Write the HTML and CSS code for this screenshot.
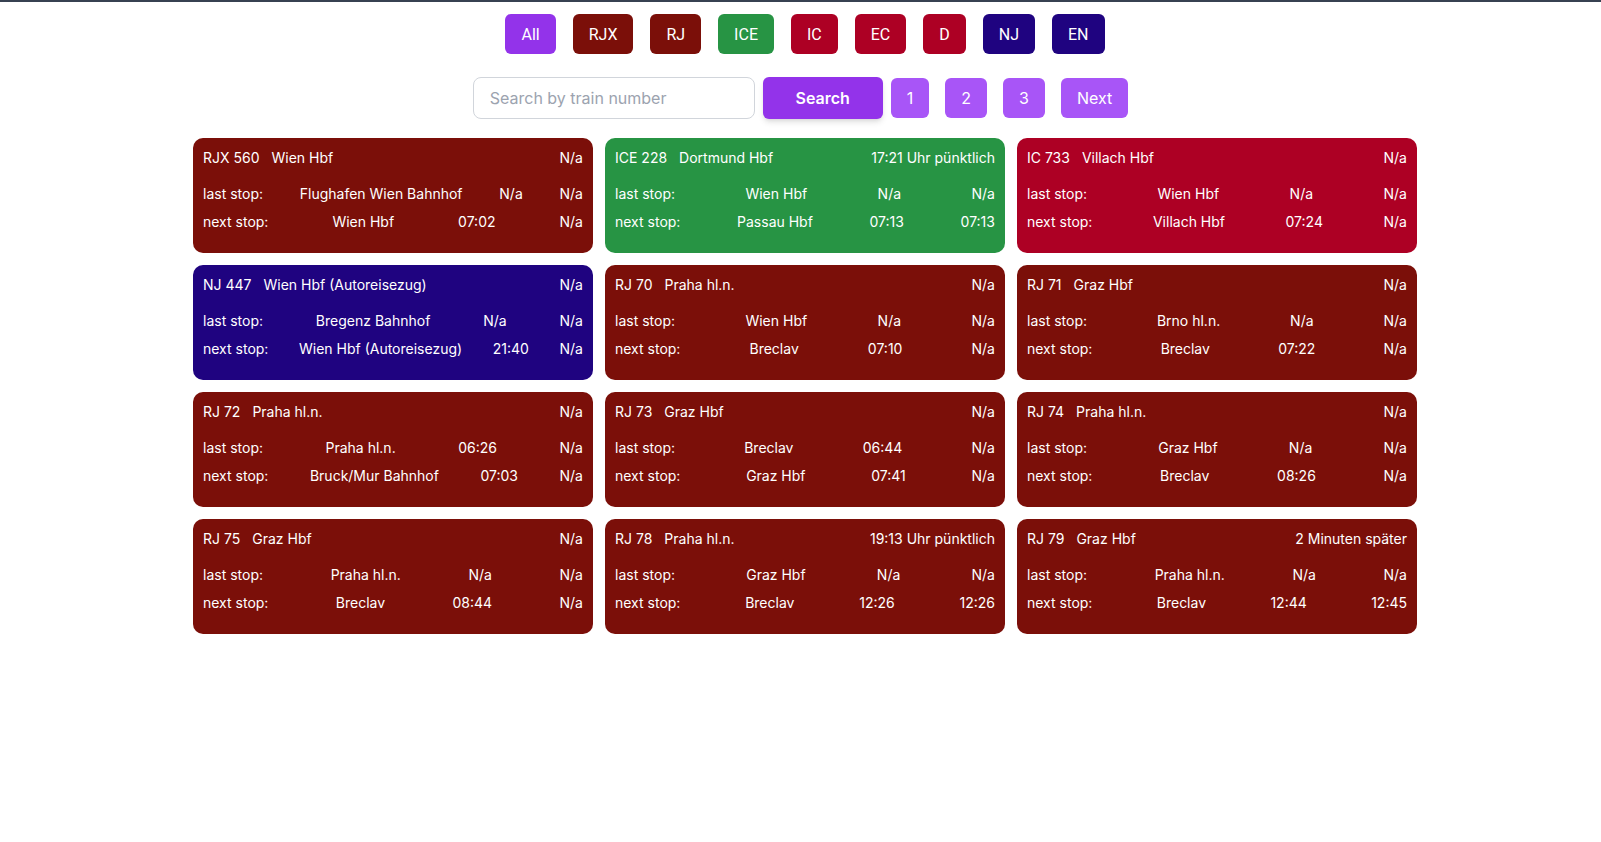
FILE: index.html
```html
<!DOCTYPE html>
<html lang="en">
<head>
<meta charset="utf-8">
<title>Trains</title>
<link rel="stylesheet" href="styles.css">
</head>
<body>
<div class="page">
  <nav class="filters">
    <button class="fbtn all">All</button>
    <button class="fbtn red">RJX</button>
    <button class="fbtn red">RJ</button>
    <button class="fbtn green">ICE</button>
    <button class="fbtn crimson">IC</button>
    <button class="fbtn crimson">EC</button>
    <button class="fbtn crimson">D</button>
    <button class="fbtn navy">NJ</button>
    <button class="fbtn navy">EN</button>
  </nav>

  <div class="searchbar">
    <input class="search-input" type="text" placeholder="Search by train number">
    <button class="search-btn">Search</button>
    <div class="pager">
      <button class="pbtn">1</button>
      <button class="pbtn">2</button>
      <button class="pbtn">3</button>
      <button class="pbtn">Next</button>
    </div>
  </div>

  <div class="grid">
    <div class="card red">
      <div class="head"><div class="title"><span>RJX 560</span><span>Wien Hbf</span></div><span>N/a</span></div>
      <div class="row"><span>last stop:</span><span>Flughafen Wien Bahnhof</span><span>N/a</span><span>N/a</span></div>
      <div class="row"><span>next stop:</span><span>Wien Hbf</span><span>07:02</span><span>N/a</span></div>
    </div>
    <div class="card green">
      <div class="head"><div class="title"><span>ICE 228</span><span>Dortmund Hbf</span></div><span>17:21 Uhr pünktlich</span></div>
      <div class="row"><span>last stop:</span><span>Wien Hbf</span><span>N/a</span><span>N/a</span></div>
      <div class="row"><span>next stop:</span><span>Passau Hbf</span><span>07:13</span><span>07:13</span></div>
    </div>
    <div class="card crimson">
      <div class="head"><div class="title"><span>IC 733</span><span>Villach Hbf</span></div><span>N/a</span></div>
      <div class="row"><span>last stop:</span><span>Wien Hbf</span><span>N/a</span><span>N/a</span></div>
      <div class="row"><span>next stop:</span><span>Villach Hbf</span><span>07:24</span><span>N/a</span></div>
    </div>

    <div class="card navy">
      <div class="head"><div class="title"><span>NJ 447</span><span>Wien Hbf (Autoreisezug)</span></div><span>N/a</span></div>
      <div class="row"><span>last stop:</span><span>Bregenz Bahnhof</span><span>N/a</span><span>N/a</span></div>
      <div class="row"><span>next stop:</span><span>Wien Hbf (Autoreisezug)</span><span>21:40</span><span>N/a</span></div>
    </div>
    <div class="card red">
      <div class="head"><div class="title"><span>RJ 70</span><span>Praha hl.n.</span></div><span>N/a</span></div>
      <div class="row"><span>last stop:</span><span>Wien Hbf</span><span>N/a</span><span>N/a</span></div>
      <div class="row"><span>next stop:</span><span>Breclav</span><span>07:10</span><span>N/a</span></div>
    </div>
    <div class="card red">
      <div class="head"><div class="title"><span>RJ 71</span><span>Graz Hbf</span></div><span>N/a</span></div>
      <div class="row"><span>last stop:</span><span>Brno hl.n.</span><span>N/a</span><span>N/a</span></div>
      <div class="row"><span>next stop:</span><span>Breclav</span><span>07:22</span><span>N/a</span></div>
    </div>

    <div class="card red">
      <div class="head"><div class="title"><span>RJ 72</span><span>Praha hl.n.</span></div><span>N/a</span></div>
      <div class="row"><span>last stop:</span><span>Praha hl.n.</span><span>06:26</span><span>N/a</span></div>
      <div class="row"><span>next stop:</span><span>Bruck/Mur Bahnhof</span><span>07:03</span><span>N/a</span></div>
    </div>
    <div class="card red">
      <div class="head"><div class="title"><span>RJ 73</span><span>Graz Hbf</span></div><span>N/a</span></div>
      <div class="row"><span>last stop:</span><span>Breclav</span><span>06:44</span><span>N/a</span></div>
      <div class="row"><span>next stop:</span><span>Graz Hbf</span><span>07:41</span><span>N/a</span></div>
    </div>
    <div class="card red">
      <div class="head"><div class="title"><span>RJ 74</span><span>Praha hl.n.</span></div><span>N/a</span></div>
      <div class="row"><span>last stop:</span><span>Graz Hbf</span><span>N/a</span><span>N/a</span></div>
      <div class="row"><span>next stop:</span><span>Breclav</span><span>08:26</span><span>N/a</span></div>
    </div>

    <div class="card red">
      <div class="head"><div class="title"><span>RJ 75</span><span>Graz Hbf</span></div><span>N/a</span></div>
      <div class="row"><span>last stop:</span><span>Praha hl.n.</span><span>N/a</span><span>N/a</span></div>
      <div class="row"><span>next stop:</span><span>Breclav</span><span>08:44</span><span>N/a</span></div>
    </div>
    <div class="card red">
      <div class="head"><div class="title"><span>RJ 78</span><span>Praha hl.n.</span></div><span>19:13 Uhr pünktlich</span></div>
      <div class="row"><span>last stop:</span><span>Graz Hbf</span><span>N/a</span><span>N/a</span></div>
      <div class="row"><span>next stop:</span><span>Breclav</span><span>12:26</span><span>12:26</span></div>
    </div>
    <div class="card red">
      <div class="head"><div class="title"><span>RJ 79</span><span>Graz Hbf</span></div><span>2 Minuten später</span></div>
      <div class="row"><span>last stop:</span><span>Praha hl.n.</span><span>N/a</span><span>N/a</span></div>
      <div class="row"><span>next stop:</span><span>Breclav</span><span>12:44</span><span>12:45</span></div>
    </div>
  </div>
</div>
</body>
</html>
```
FILE: styles.css
```css
* { box-sizing: border-box; }

html, body {
  margin: 0;
  padding: 0;
  background: #ffffff;
}

body {
  border-top: 2px solid #374151;
  font-family: Inter, "Noto Sans", sans-serif;
  color: #111827;
}

.page {
  padding-top: 12px;
}

.filters {
  display: flex;
  justify-content: center;
  gap: 17px;
  padding-left: 9px;
}

.fbtn {
  height: 40px;
  padding: 0 16px;
  border: none;
  border-radius: 6px;
  color: #ffffff;
  font-family: Roboto, "Liberation Sans", sans-serif;
  font-size: 16px;
  cursor: pointer;
}

.all { background: #9333ea; }
.red { background: #7b0f09; }
.green { background: #279444; }
.crimson { background: #ad0024; }
.navy { background: #1f0380; }

.searchbar {
  display: flex;
  justify-content: center;
  align-items: center;
  gap: 8px;
  margin-top: 23px;
}

.search-input {
  width: 282px;
  height: 42px;
  padding: 0 16px;
  border: 1px solid #d1d5db;
  border-radius: 8px;
  font-family: Inter, "Noto Sans", sans-serif;
  font-size: 16px;
  color: #111827;
  outline: none;
}

.search-input::placeholder {
  color: #9ca3af;
}

.search-btn {
  width: 120px;
  height: 42px;
  border: none;
  border-radius: 6px;
  background: #9333ea;
  color: #ffffff;
  font-family: Inter, "Noto Sans", sans-serif;
  font-size: 16px;
  font-weight: 600;
  box-shadow: 0 4px 6px -1px rgba(0,0,0,0.12), 0 2px 4px -2px rgba(0,0,0,0.1);
}

.pager {
  display: flex;
  gap: 16px;
}

.pbtn {
  height: 40px;
  padding: 0 16px;
  border: none;
  border-radius: 6px;
  background: #a855f7;
  color: #ffffff;
  font-family: Inter, "Noto Sans", sans-serif;
  font-size: 16px;
}

.grid {
  display: grid;
  grid-template-columns: repeat(3, 400px);
  justify-content: center;
  gap: 12px;
  margin-top: 19px;
  padding-left: 9px;
}

.card {
  height: 115px;
  padding: 10px 10px 0;
  border-radius: 10px;
  color: #ffffff;
  font-size: 14px;
  line-height: 20px;
}

.head {
  display: flex;
  justify-content: space-between;
  margin-bottom: 12px;
}

.title {
  display: flex;
  gap: 12px;
}

.row {
  display: flex;
  justify-content: space-between;
  padding: 4px 0;
}
```
